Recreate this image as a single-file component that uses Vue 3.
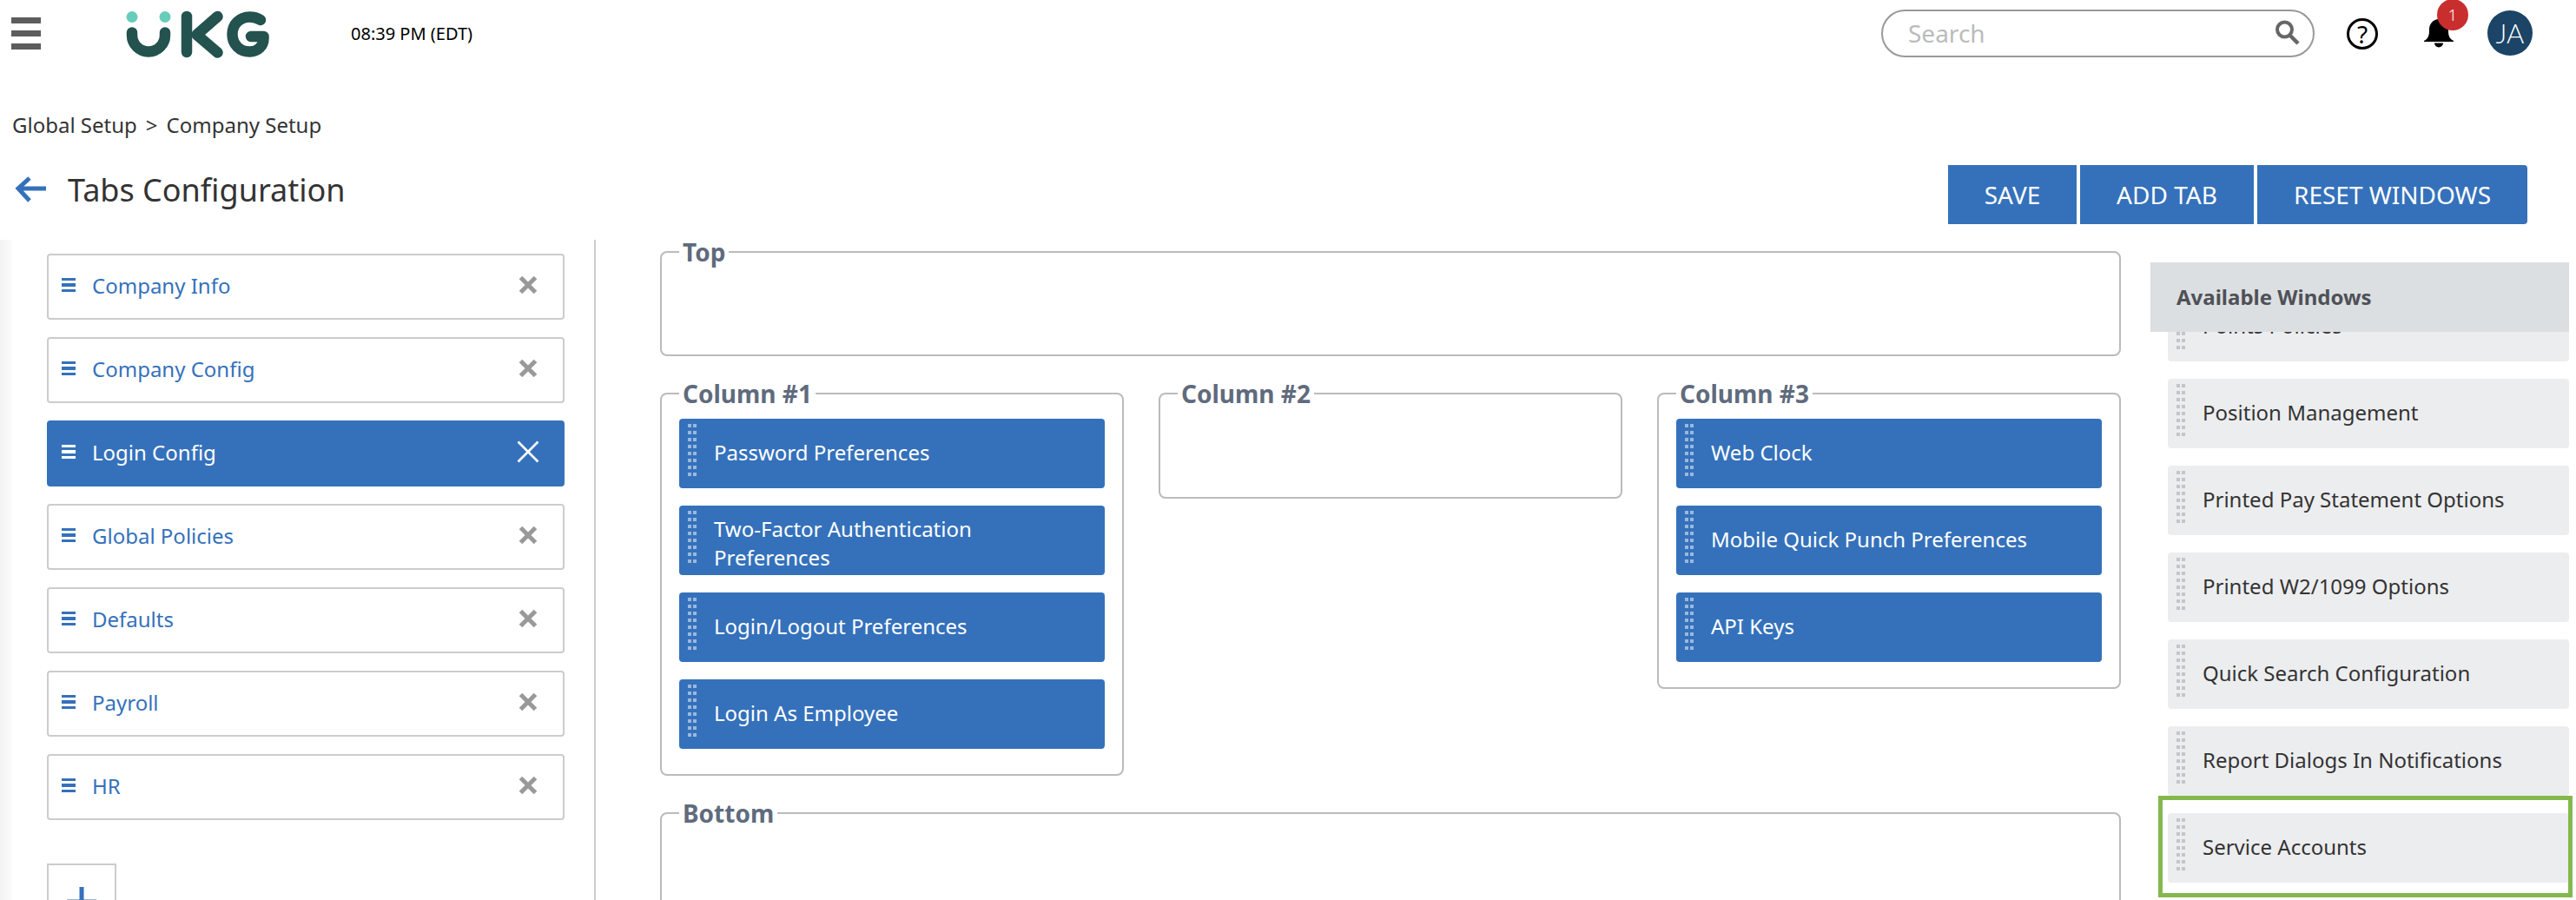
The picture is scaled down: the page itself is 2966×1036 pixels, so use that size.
<script setup>
const tabs = [
  { name: 'Company Info' },
  { name: 'Company Config' },
  { name: 'Login Config', active: true },
  { name: 'Global Policies' },
  { name: 'Defaults' },
  { name: 'Payroll' },
  { name: 'HR' }
]
const columns = [
  { title: 'Column #1', items: ['Password Preferences', 'Two-Factor Authentication Preferences', 'Login/Logout Preferences', 'Login As Employee'] },
  { title: 'Column #2', items: [] },
  { title: 'Column #3', items: ['Web Clock', 'Mobile Quick Punch Preferences', 'API Keys'] }
]
const available = [
  'Points Policies',
  'Position Management',
  'Printed Pay Statement Options',
  'Printed W2/1099 Options',
  'Quick Search Configuration',
  'Report Dialogs In Notifications',
  'Service Accounts'
]
</script>

<template>
  <div class="page">
    <header class="topbar">
      <div class="burger"><span></span><span></span><span></span></div>
      <svg class="logo" viewBox="130 0 200 80" width="200" height="80" aria-label="UKG">
        <circle cx="152" cy="21.5" r="6.5" fill="#66cdbb" />
        <circle cx="190" cy="21.5" r="6.5" fill="#66cdbb" />
        <g fill="none" stroke="#23524f" stroke-width="12.5" stroke-linecap="round" stroke-linejoin="round">
          <path d="M152 39.5V42.5A19 19 0 0 0 190 42.5V39.5" />
          <path d="M215 21V62" />
          <path d="M250.500 21L226.500 42L250.500 62.500" />
          <path d="M300 25C296 22.500 292 21.500 287.500 21.500C276 21.500 267.500 30 267.500 41.500C267.500 53 276 61.500 287.500 61.500C297 61.500 303.500 55 303.500 46V44H289" />
        </g>
      </svg>
      <span class="time">08:39 PM (EDT)</span>
      <div class="search">
        <input class="search-input" type="text" placeholder="Search" />
        <svg class="search-icon" viewBox="0 0 30 30" width="30" height="30" aria-hidden="true">
          <circle cx="10.500" cy="11" r="8.500" fill="none" stroke="#666" stroke-width="4" />
          <path d="M16.500 17.500L26 27" stroke="#666" stroke-width="4.500" fill="none" />
        </svg>
      </div>
      <div class="help">?</div>
      <div class="bell">
        <svg viewBox="0 0 40 40" width="40" height="40" aria-hidden="true">
          <path d="M3 29H37V28C31 25 31 20 31 15C31 8 26 3 20 3C14 3 9 8 9 15C9 20 9 25 3 28Z" fill="#000" />
          <path d="M15 30.500H25A5 5 0 0 1 15 30.500Z" fill="#000" />
        </svg>
        <span class="badge">1</span>
      </div>
      <div class="avatar">JA</div>
    </header>

    <nav class="crumbs">
      <span>Global Setup</span><span class="sep">&gt;</span><span>Company Setup</span>
    </nav>

    <div class="title-row">
      <div class="title">
        <svg class="back" viewBox="0 0 38 32" width="38" height="32" aria-hidden="true">
          <path d="M36 15H5M17 3L4 15L17 29" fill="none" stroke="#3571bb" stroke-width="5" />
        </svg>
        <h1>Tabs Configuration</h1>
      </div>
      <div class="actions">
        <button class="btn save">SAVE</button>
        <button class="btn add">ADD TAB</button>
        <button class="btn reset">RESET WINDOWS</button>
      </div>
    </div>

    <main class="main">
      <aside class="tabs">
        <div v-for="tab in tabs" :key="tab.name" class="tab" :class="{ active: tab.active }">
          <span class="lines"><i></i><i></i><i></i></span>
          <span class="tab-name">{{ tab.name }}</span>
          <svg class="close" viewBox="0 0 24 24" width="24" height="24" aria-hidden="true">
            <path d="M3.500 3.500L20.500 20.500M20.500 3.500L3.500 20.500" fill="none" stroke="currentColor" />
          </svg>
        </div>
        <div class="add-tab">
          <svg viewBox="0 0 36 36" width="36" height="36" aria-hidden="true">
            <path d="M18 1V35M1 18H35" stroke="#3571bb" stroke-width="5" fill="none" />
          </svg>
        </div>
      </aside>

      <section class="canvas">
        <fieldset class="zone band">
          <legend>Top</legend>
        </fieldset>
        <div class="cols">
          <fieldset v-for="col in columns" :key="col.title" class="zone col">
            <legend>{{ col.title }}</legend>
            <div v-for="item in col.items" :key="item" class="win blue">
              <span class="grip"><i v-for="n in 16" :key="n"></i></span>
              <span class="win-name" :class="{ two: item.length > 34 }">{{ item }}</span>
            </div>
          </fieldset>
        </div>
        <fieldset class="zone band tall">
          <legend>Bottom</legend>
        </fieldset>
      </section>

      <aside class="avail">
        <h2 class="avail-head">Available Windows</h2>
        <div v-for="item in available" :key="item" class="win grey">
          <span class="grip"><i v-for="n in 16" :key="n"></i></span>
          <span class="win-name">{{ item }}</span>
          <span v-if="item === 'Service Accounts'" class="highlight"></span>
        </div>
      </aside>
    </main>
  </div>
</template>

<style scoped>
.page {
  width: 2966px;
  height: 1036px;
  overflow: hidden;
  background: #fff;
  font-family: "Noto Sans", "Open Sans", sans-serif;
  font-size: 24px;
  color: #333;
}
.topbar {
  display: flex;
  align-items: center;
  height: 76px;
  padding: 0 50px 0 13px;
  box-sizing: border-box;
}
.burger {
  display: flex;
  flex-direction: column;
  gap: 8px;
  width: 34px;
}
.burger span {
  height: 7px;
  background: #5d5d5d;
}
.logo {
  margin-left: 83px;
  flex: none;
}
.time {
  margin-left: 74px;
  font-size: 20px;
  color: #000;
}
.search {
  display: flex;
  align-items: center;
  box-sizing: border-box;
  width: 499px;
  height: 55px;
  margin-left: auto;
  padding: 0 13px 0 29px;
  border: 2px solid #999;
  border-radius: 28px;
}
.search-input {
  flex: 1;
  min-width: 0;
  border: 0;
  outline: 0;
  padding: 0;
  background: none;
  font: inherit;
  font-size: 28px;
}
.search-input::placeholder {
  color: #bbb;
  opacity: 1;
}
.search-icon {
  flex: none;
}
.help {
  box-sizing: border-box;
  width: 36px;
  height: 36px;
  margin: 2px 0 0 37px;
  border: 3px solid #000;
  border-radius: 50%;
  color: #000;
  font-size: 28px;
  line-height: 30px;
  text-align: center;
}
.bell {
  position: relative;
  width: 40px;
  height: 40px;
  margin: 2px 0 0 50px;
}
.bell svg {
  display: block;
}
.badge {
  position: absolute;
  top: -20px;
  left: 18px;
  width: 36px;
  height: 36px;
  border-radius: 50%;
  background: #c92e2e;
  color: #fff;
  font-size: 18px;
  font-weight: 300;
  line-height: 36px;
  text-align: center;
}
.avatar {
  width: 52px;
  height: 52px;
  margin-left: 36px;
  border-radius: 50%;
  background: #1b4466;
  color: #fff;
  font-family: Lato, "Noto Sans", sans-serif;
  font-size: 31px;
  font-weight: 300;
  line-height: 52px;
  text-align: center;
}
.crumbs {
  display: flex;
  height: 40px;
  margin-top: 48px;
  margin-bottom: 2px;
  padding-left: 14px;
  line-height: 40px;
}
.sep {
  margin: 0 10px;
}
.title-row {
  display: flex;
  justify-content: space-between;
  height: 110px;
  padding-right: 56px;
}
.title {
  display: flex;
  align-items: center;
  height: 52px;
  margin-top: 26px;
  padding-left: 17px;
}
.back {
  flex: none;
}
.title h1 {
  margin: 2px 0 0 23px;
  font-size: 36px;
  font-weight: 400;
  line-height: 52px;
}
.actions {
  display: flex;
  gap: 4px;
  height: 68px;
  margin-top: 24px;
}
.btn {
  border: 0;
  padding: 0;
  background: #3571bb;
  color: #fff;
  font-family: inherit;
  font-size: 28px;
}
.save { width: 148px; }
.add { width: 200px; }
.reset {
  width: 311px;
  border-radius: 0 4px 4px 0;
}
.main {
  display: flex;
  align-items: flex-start;
  height: 760px;
}
.tabs {
  flex: none;
  box-sizing: border-box;
  width: 686px;
  height: 760px;
  padding: 16px 0 0 54px;
  overflow: hidden;
  border-right: 2px solid #ccc;
  background: linear-gradient(to right, #f3f3f3, #fbfbfb 13px, #fff 14px);
}
.tab {
  display: flex;
  align-items: center;
  box-sizing: border-box;
  width: 596px;
  height: 76px;
  margin-bottom: 20px;
  padding: 0 28px 0 15px;
  border: 2px solid #ccc;
  border-radius: 4px;
  background: #fff;
  color: #3571bb;
}
.tab.active {
  border-color: #3571bb;
  background: #3571bb;
  color: #fff;
}
.lines {
  display: flex;
  flex-direction: column;
  gap: 3px;
  width: 16px;
  margin-top: -4px;
}
.lines i {
  height: 3.500px;
  background: currentColor;
}
.tab-name {
  flex: 1;
  margin: 0 0 0 19px;
  padding-bottom: 4px;
}
.close {
  flex: none;
  margin-top: -4px;
  color: #999;
  stroke-width: 5px;
}
.active .close {
  color: #fff;
  stroke-width: 2px;
  transform: scale(1.35);
}
.add-tab {
  display: flex;
  justify-content: center;
  box-sizing: border-box;
  width: 80px;
  height: 80px;
  margin-top: 50px;
  padding-top: 24px;
  border: 2px solid #ccc;
}
.canvas {
  display: flex;
  flex-direction: column;
  gap: 29px;
  flex: none;
  width: 1682px;
  margin-left: 74px;
}
.zone {
  box-sizing: border-box;
  min-width: 0;
  margin: 0;
  padding: 15px 20px 9px;
  border: 2px solid #bbb;
  border-radius: 8px;
}
.zone legend {
  padding: 0 4px;
  color: #5f6b7d;
  font-size: 28px;
  font-weight: 700;
  line-height: 28px;
}
.band {
  height: 134px;
}
.tall {
  height: 300px;
}
.cols {
  display: flex;
  align-items: flex-start;
  gap: 40px;
}
.col {
  flex: 1 1 0;
  min-height: 135px;
}
.win {
  position: relative;
  display: flex;
  align-items: center;
  box-sizing: border-box;
  height: 80px;
  margin-bottom: 20px;
  padding: 0 40px 0 10px;
  border-radius: 4px;
  line-height: 33px;
}
.win.blue {
  background: #3571bb;
  color: #fff;
}
.win.grey {
  margin-left: 20px;
  background: #ecedef;
  color: #333;
}
.grip {
  display: grid;
  grid-template-columns: 4px 4px;
  gap: 4px 2px;
  flex: none;
  align-self: flex-start;
  margin-top: 6px;
}
.grip i {
  height: 4px;
  background: rgba(255, 255, 255, 0.5);
}
.grey .grip i {
  background: #c4c5c8;
}
.win-name {
  margin-left: 20px;
  padding-bottom: 4px;
}
.win-name.two {
  padding: 5px 0 0;
}
.avail {
  position: relative;
  box-sizing: border-box;
  flex: none;
  width: 482px;
  margin-left: 34px;
  padding-top: 60px;
}
.avail-head {
  position: absolute;
  z-index: 1;
  top: 26px;
  left: 0;
  right: 0;
  height: 80px;
  margin: 0;
  padding-left: 30px;
  background: #dcdfe2;
  color: #4e5156;
  font-size: 24px;
  font-weight: 700;
  line-height: 80px;
}
.highlight {
  position: absolute;
  top: -20px;
  bottom: -17px;
  left: -11px;
  right: -4px;
  border: 5px solid #84b84f;
}
</style>
